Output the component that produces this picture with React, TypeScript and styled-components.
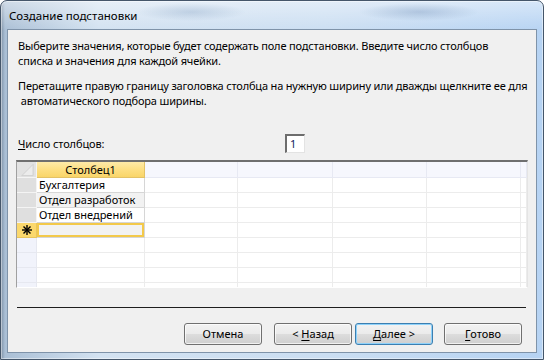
import styled, { createGlobalStyle } from "styled-components";

const GlobalStyle = createGlobalStyle`
  html, body {
    margin: 0;
    padding: 0;
  }
  body {
    width: 544px;
    height: 360px;
    overflow: hidden;
    font-family: "Noto Sans", "Open Sans", sans-serif;
    font-size: 11px;
    color: #000;
  }
`;

const Window = styled.div`
  width: 544px;
  height: 360px;
  box-sizing: border-box;
  display: flex;
  flex-direction: column;
  padding: 0 6px 6px 6px;
  border: 1px solid #45566a;
  border-radius: 7px 7px 0 0;
  box-shadow: inset 0 0 0 1px rgba(255, 255, 255, 0.45);
  background:
    radial-gradient(ellipse 55px 9px at 190px 11px, rgba(120, 150, 185, 0.3), transparent),
    radial-gradient(ellipse 60px 9px at 418px 11px, rgba(110, 140, 180, 0.35), transparent),
    linear-gradient(to bottom, rgba(255, 255, 255, 0.45) 0, rgba(255, 255, 255, 0) 30px),
    linear-gradient(to right, #7f92a7 0, #aabfd5 4px, #d3e2f1 18%, #cbdef2 60%, #b6d3f3 100%);
`;

const TitleBar = styled.div`
  height: 28px;
  display: flex;
  align-items: center;
  padding-left: 2px;
  font-size: 11.5px;
  color: #000;
  white-space: nowrap;
`;

const Client = styled.div`
  flex: 1;
  display: flex;
  flex-direction: column;
  background: #f0f0f0;
  border: 1px solid #7f93a9;
  padding-left: 8px;
`;

const Paragraph = styled.p<{ $top: number }>`
  margin: ${(p) => p.$top}px 0 0 2px;
  line-height: 15px;
  letter-spacing: -0.17px;
  white-space: nowrap;
`;

const CountRow = styled.div`
  display: flex;
  align-items: center;
  height: 20px;
  margin-top: 25px;
`;

const CountLabel = styled.label`
  width: 269px;
  padding-left: 2px;
  box-sizing: border-box;
  line-height: 15px;
  letter-spacing: -0.1px;
`;

const CountInput = styled.div`
  width: 20px;
  height: 19px;
  box-sizing: border-box;
  background: #fff;
  border-top: 2px solid #6d6d6d;
  border-left: 2px solid #6d6d6d;
  border-right: 1px solid #e3e3e3;
  border-bottom: 1px solid #e3e3e3;
  padding-left: 3px;
  line-height: 16px;
  color: #121a5e;
`;

const Grid = styled.div`
  margin-top: 7px;
  width: 512px;
  height: 128px;
  box-sizing: border-box;
  border-top: 2px solid #6f6f6f;
  border-left: 1px solid #a0a0a0;
  border-right: 1px solid #e4e4e4;
  border-bottom: 1px solid #ffffff;
  background: #fff;
  overflow: hidden;
  display: flex;
  flex-direction: column;
`;

const Row = styled.div<{ $h: number }>`
  display: flex;
  height: ${(p) => p.$h}px;
  flex-shrink: 0;
`;

type CellKind =
  | "corner"
  | "header"
  | "headerActive"
  | "selector"
  | "selectorNew"
  | "selectorEmpty"
  | "data"
  | "dataAlt"
  | "dataNew"
  | "empty";

const cellBg: Record<CellKind, string> = {
  corner: "#e2e2e2",
  header: "#f6f7fd",
  headerActive: "linear-gradient(to bottom, #feeaa8 0%, #fde086 45%, #f9d569 100%)",
  selector: "#dfdfdf",
  selectorNew: "#fbd86c",
  selectorEmpty: "#f1f3fb",
  data: "#ffffff",
  dataAlt: "#f2f2f2",
  dataNew: "#f2f2f2",
  empty: "#ffffff",
};

const cellLine: Record<CellKind, string> = {
  corner: "#f4f4f4",
  header: "#e7e9f3",
  headerActive: "#e3c266",
  selector: "#f4f4f4",
  selectorNew: "#e8c55c",
  selectorEmpty: "#e6e8f0",
  data: "#d6d6d6",
  dataAlt: "#d6d6d6",
  dataNew: "#d6d6d6",
  empty: "#ececec",
};

const Cell = styled.div<{ $w?: number; $kind: CellKind; $center?: boolean }>`
  box-sizing: border-box;
  ${(p) => (p.$w ? `width: ${p.$w}px; flex-shrink: 0;` : "flex: 1;")}
  background: ${(p) => cellBg[p.$kind]};
  border-right: 1px solid ${(p) => cellLine[p.$kind]};
  border-bottom: 1px solid ${(p) => cellLine[p.$kind]};
  padding: 0 2px;
  display: flex;
  align-items: center;
  justify-content: ${(p) => (p.$center ? "center" : "flex-start")};
  white-space: nowrap;
  overflow: hidden;
  line-height: 14px;
  box-shadow: ${(p) => (p.$kind === "dataNew" ? "inset 0 0 0 2px #f3c94a" : "none")};
`;

const Separator = styled.div`
  margin: 19px 10px 0 1px;
  height: 1px;
  background: #1e1e1e;
`;

const ButtonRow = styled.div`
  display: flex;
  justify-content: flex-end;
  margin-top: 15px;
  padding-right: 14px;
`;

const Button = styled.button<{ $gap: number; $default?: boolean }>`
  width: 78px;
  height: 22px;
  margin-left: ${(p) => p.$gap}px;
  box-sizing: border-box;
  border-radius: 3px;
  border: 1px solid ${(p) => (p.$default ? "#3c7fb1" : "#707070")};
  background: linear-gradient(to bottom, #f2f2f2 0%, #ebebeb 49%, #dddddd 50%, #cfcfcf 100%);
  box-shadow: ${(p) =>
    p.$default ? "inset 0 0 0 1px #8fd2fa" : "inset 0 0 0 1px rgba(255, 255, 255, 0.7)"};
  font-family: "Noto Sans", "Open Sans", sans-serif;
  font-size: 11px;
  color: #000;
  padding: 0;
  line-height: 18px;

  u {
    text-decoration-thickness: 1px;
    text-underline-offset: 2px;
  }
`;

const colWidths = [20, 108, 93, 95, 94, 94];

const items = ["Бухгалтерия", "Отдел разработок", "Отдел внедрений"];

function CornerMark() {
  return (
    <svg width="16" height="14" viewBox="0 0 16 14">
      <polygon points="15,1 15,13 3,13" fill="#ececec" stroke="#cfcfcf" strokeWidth="1" />
    </svg>
  );
}

function NewRowMark() {
  return (
    <svg width="10" height="10" viewBox="0 0 10 10">
      <g stroke="#000" strokeWidth="1.4" strokeLinecap="square">
        <line x1="5" y1="0.7" x2="5" y2="9.3" />
        <line x1="0.7" y1="5" x2="9.3" y2="5" />
        <line x1="2" y1="2" x2="8" y2="8" />
        <line x1="8" y1="2" x2="2" y2="8" />
      </g>
    </svg>
  );
}

function EmptyCells() {
  return (
    <>
      {colWidths.slice(2).map((w, i) => (
        <Cell key={i} $w={w} $kind="empty" />
      ))}
      <Cell $kind="empty" />
    </>
  );
}

function Datasheet() {
  return (
    <Grid>
      <Row $h={16}>
        <Cell $w={colWidths[0]} $kind="corner" $center>
          <CornerMark />
        </Cell>
        <Cell $w={colWidths[1]} $kind="headerActive" $center>
          Столбец1
        </Cell>
        {colWidths.slice(2).map((w, i) => (
          <Cell key={i} $w={w} $kind="header" />
        ))}
        <Cell $kind="header" />
      </Row>
      {items.map((name, i) => (
        <Row $h={15} key={name}>
          <Cell $w={colWidths[0]} $kind="selector" />
          <Cell $w={colWidths[1]} $kind={i % 2 === 1 ? "dataAlt" : "data"}>
            {name}
          </Cell>
          <EmptyCells />
        </Row>
      ))}
      <Row $h={15}>
        <Cell $w={colWidths[0]} $kind="selectorNew" $center>
          <NewRowMark />
        </Cell>
        <Cell $w={colWidths[1]} $kind="dataNew" />
        <EmptyCells />
      </Row>
      {[0, 1, 2, 3].map((r) => (
        <Row $h={15} key={r}>
          <Cell $w={colWidths[0]} $kind="selectorEmpty" />
          <Cell $w={colWidths[1]} $kind="empty" />
          <EmptyCells />
        </Row>
      ))}
    </Grid>
  );
}

export default function App() {
  return (
    <>
      <GlobalStyle />
      <Window>
        <TitleBar>Создание подстановки</TitleBar>
        <Client>
          <Paragraph $top={8}>
            Выберите значения, которые будет содержать поле подстановки. Введите число столбцов
            <br />
            списка и значения для каждой ячейки.
          </Paragraph>
          <Paragraph $top={10}>
            Перетащите правую границу заголовка столбца на нужную ширину или дважды щелкните ее для
            <br />
            &nbsp;автоматического подбора ширины.
          </Paragraph>
          <CountRow>
            <CountLabel>
              <u>Ч</u>исло столбцов:
            </CountLabel>
            <CountInput>1</CountInput>
          </CountRow>
          <Datasheet />
          <Separator />
          <ButtonRow>
            <Button $gap={0}>Отмена</Button>
            <Button $gap={12}>
              &lt; <u>Н</u>азад
            </Button>
            <Button $gap={3} $default>
              <u>Д</u>алее &gt;
            </Button>
            <Button $gap={11}>
              <u>Г</u>отово
            </Button>
          </ButtonRow>
        </Client>
      </Window>
    </>
  );
}
